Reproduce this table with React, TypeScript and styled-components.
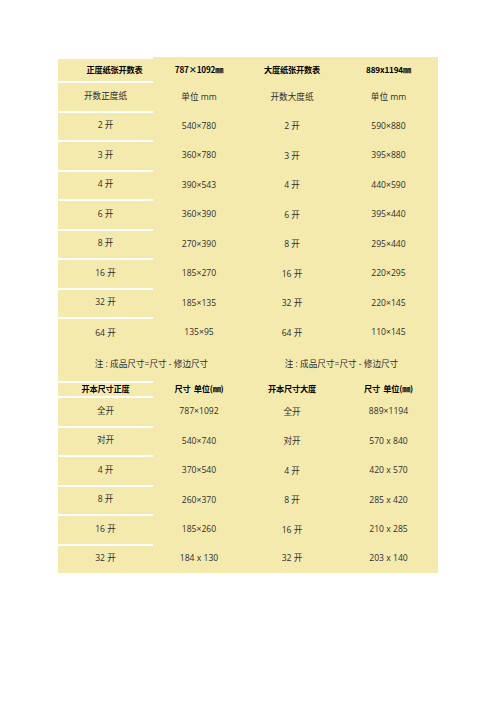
import styled, { createGlobalStyle } from "styled-components";

const GlobalStyle = createGlobalStyle`
  body {
    margin: 0;
    background: #ffffff;
  }
`;

const Page = styled.div`
  padding: 57px 0 0 58px;
  width: 496px;
  height: 702px;
  box-sizing: border-box;
`;

const Table = styled.div`
  display: grid;
  grid-template-columns: 95px 92px 94px 99px;
  width: 380px;
  background-color: #f4eaae;
  font-family: "Open Sans", "Noto Sans CJK SC", sans-serif;
  font-size: 8.6px;
  color: #2e2e2e;
`;

const Cell = styled.div<{ $h: number; $line?: boolean; $top?: boolean; $head?: boolean; $span?: number }>`
  display: flex;
  align-items: center;
  justify-content: center;
  box-sizing: border-box;
  height: ${(p) => p.$h}px;
  padding-bottom: 3px;
  grid-column: span ${(p) => p.$span || 1};
  border-bottom: ${(p) => (p.$line ? "2px solid #ffffff" : "none")};
  border-top: ${(p) => (p.$top ? "2px solid #ffffff" : "none")};
  white-space: nowrap;
  ${(p) =>
    p.$head &&
    `
    font-family: "Noto Sans CJK SC", sans-serif;
    font-weight: 700;
    font-size: 8.2px;
    color: #000000;
    letter-spacing: -0.2px;
  `}
`;

const Note = styled.span`
  color: #2e2e2e;
`;

type Row = [string, string, string, string];

const first: Row[] = [
  ["开数正度纸", "单位 mm", "开数大度纸", "单位 mm"],
  ["2 开", "540×780", "2 开", "590×880"],
  ["3 开", "360×780", "3 开", "395×880"],
  ["4 开", "390×543", "4 开", "440×590"],
  ["6 开", "360×390", "6 开", "395×440"],
  ["8 开", "270×390", "8 开", "295×440"],
  ["16 开", "185×270", "16 开", "220×295"],
  ["32 开", "185×135", "32 开", "220×145"],
  ["64 开", "135×95", "64 开", "110×145"],
];

const second: Row[] = [
  ["全开", "787×1092", "全开", "889×1194"],
  ["对开", "540×740", "对开", "570 x 840"],
  ["4 开", "370×540", "4 开", "420 x 570"],
  ["8 开", "260×370", "8 开", "285 x 420"],
  ["16 开", "185×260", "16 开", "210 x 285"],
  ["32 开", "184 x 130", "32 开", "203 x 140"],
];

const H = 29.5;

const DataRow = ({ row, h, line }: { row: Row; h: number; line: boolean }) => (
  <>
    <Cell $h={h} $line={line}>{row[0]}</Cell>
    <Cell $h={h}>{row[1]}</Cell>
    <Cell $h={h}>{row[2]}</Cell>
    <Cell $h={h}>{row[3]}</Cell>
  </>
);

export default function App() {
  return (
    <Page>
      <GlobalStyle />
      <Table>
        <Cell $h={26} $line $top $head style={{ paddingLeft: 18 }}>
          正度纸张开数表
        </Cell>
        <Cell $h={26} $head>787×1092㎜</Cell>
        <Cell $h={26} $head>大度纸张开数表</Cell>
        <Cell $h={26} $head>889x1194㎜</Cell>

        {first.map((r, i) => (
          <DataRow key={"a" + i} row={r} h={H} line={i < first.length - 1} />
        ))}

        <Cell $h={32.5} $span={2}>
          <Note>注 : 成品尺寸=尺寸 - 修边尺寸</Note>
        </Cell>
        <Cell $h={32.5} $span={2}>
          <Note>注 : 成品尺寸=尺寸 - 修边尺寸</Note>
        </Cell>

        <Cell $h={17} $line $top $head>开本尺寸正度</Cell>
        <Cell $h={17} $head>尺寸&nbsp;&nbsp;单位(㎜)</Cell>
        <Cell $h={17} $head>开本尺寸大度</Cell>
        <Cell $h={17} $head>尺寸&nbsp;&nbsp;单位(㎜)</Cell>

        {second.map((r, i) => (
          <DataRow
            key={"b" + i}
            row={r}
            h={i === second.length - 1 ? 27 : H}
            line={i < second.length - 1}
          />
        ))}
      </Table>
    </Page>
  );
}
